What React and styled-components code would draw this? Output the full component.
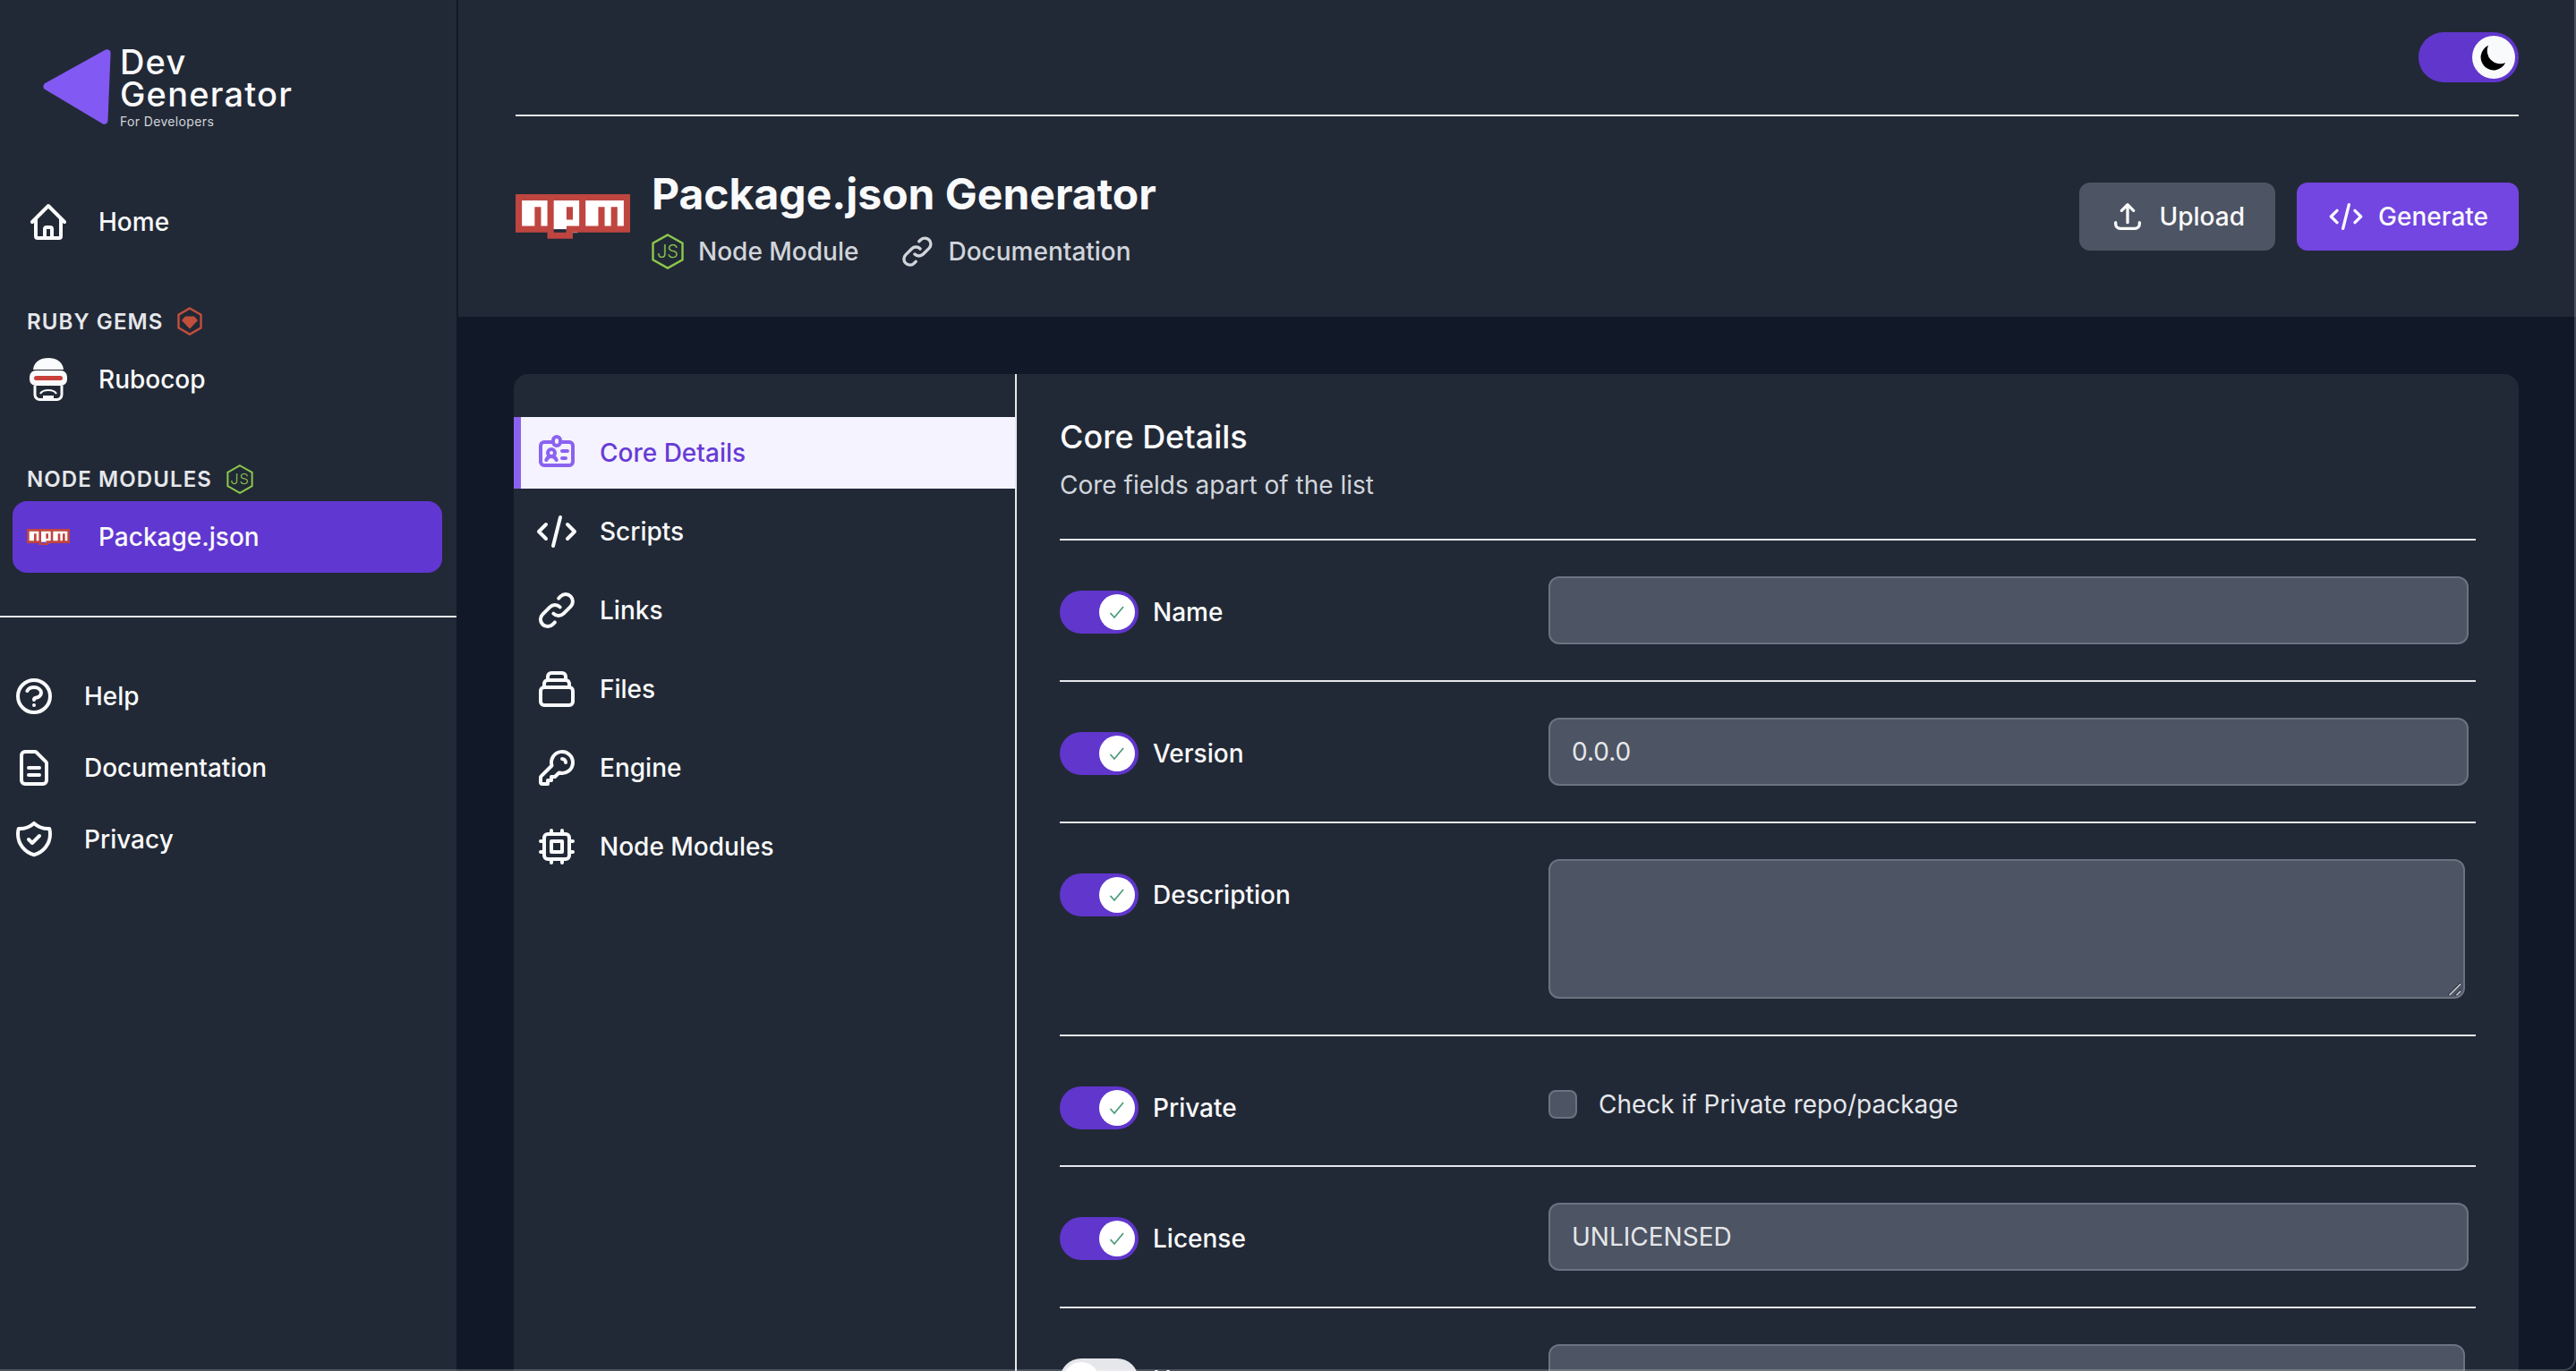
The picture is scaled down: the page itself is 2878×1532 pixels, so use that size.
import styled, { createGlobalStyle } from "styled-components";
import {
  HiOutlineHome,
  HiOutlineQuestionMarkCircle,
  HiOutlineDocumentText,
  HiOutlineShieldCheck,
  HiOutlineCode,
  HiOutlineLink,
  HiOutlineKey,
  HiOutlineChip,
  HiOutlineIdentification,
  HiOutlineUpload,
  HiOutlineCollection,
} from "react-icons/hi";

const GlobalStyle = createGlobalStyle`
  html, body {
    margin: 0;
    height: 100%;
    overflow: hidden;
    background: #111827;
  }
  body {
    font-family: Inter, "Liberation Sans", sans-serif;
    color: #f9fafb;
  }
  * {
    box-sizing: border-box;
  }
`;

const Page = styled.div`
  height: 100vh;
  display: flex;
  overflow: hidden;
  background: #111827;
`;
const WindowEdge = styled.div`
  position: fixed;
  inset: 0;
  pointer-events: none;
  border-right: 2px solid rgba(255, 255, 255, 0.2);
  border-bottom: 2px solid rgba(255, 255, 255, 0.2);
  border-bottom-right-radius: 14px;
`;

/* sidebar */
const Sidebar = styled.aside`
  width: 512px;
  flex-shrink: 0;
  background: #222936;
  border-right: 2px solid #111827;
`;
const LogoBlock = styled.div`
  height: 208px;
  padding: 54px 0 0 48px;
  display: flex;
  align-items: flex-start;
  gap: 10px;
`;
const LogoText = styled.div`
  margin-top: -3px;
`;
const LogoWord = styled.div`
  font-size: 38px;
  line-height: 36px;
  font-weight: 500;
  letter-spacing: 1.2px;
  color: #f9fafb;
`;
const LogoSub = styled.div`
  margin-top: 4px;
  font-size: 14px;
  line-height: 18px;
  letter-spacing: 0.35px;
  color: #d1d5db;
`;
const NavItem = styled.div`
  height: 80px;
  margin: 0 16px 0 14px;
  padding-left: ${(p) => p.$inset}px;
  display: flex;
  align-items: center;
  gap: 32px;
  font-size: 28px;
  font-weight: 500;
  color: #f9fafb;
  border-radius: 16px;
  background: ${(p) => (p.$active ? "#6137d1" : "transparent")};
  svg {
    flex-shrink: 0;
  }
`;
const NavIconBox = styled.span`
  width: 48px;
  height: 48px;
  display: flex;
  align-items: center;
  justify-content: center;
`;
const SectionHeading = styled.div`
  height: 40px;
  margin: 51px 0 5px;
  padding-left: 30px;
  display: flex;
  align-items: center;
  gap: 16px;
  font-size: 24px;
  font-weight: 600;
  letter-spacing: 1.1px;
  color: #e5e7eb;
`;
const SidebarRule = styled.div`
  height: 2px;
  margin: 48px 0;
  background: #e5e7eb;
`;

/* main */
const Main = styled.main`
  flex: 1;
  min-width: 0;
`;
const Header = styled.header`
  height: 354px;
  padding: 0 64px;
  background: #222936;
`;
const TopBar = styled.div`
  height: 130px;
  padding-top: 36px;
  display: flex;
  justify-content: flex-end;
  border-bottom: 2px solid #e5e7eb;
`;
const ThemeSwitch = styled.div`
  width: 112px;
  height: 56px;
  padding: 4px;
  border-radius: 28px;
  background: #6036cd;
  display: flex;
  justify-content: flex-end;
`;
const ThemeKnob = styled.div`
  width: 48px;
  height: 48px;
  border-radius: 50%;
  background: #f9fafb;
  display: flex;
  align-items: center;
  justify-content: center;
`;
const TitleRow = styled.div`
  height: 224px;
  display: flex;
  align-items: center;
  gap: 24px;
`;
const TitleBlock = styled.div`
  flex: 1;
  margin-top: 2px;
`;
const Title = styled.h1`
  margin: 0;
  font-size: 48px;
  line-height: 64px;
  font-weight: 700;
  color: #f9fafb;
`;
const MetaRow = styled.div`
  margin-top: 12px;
  display: flex;
  align-items: center;
  gap: 46px;
`;
const MetaItem = styled.div`
  display: flex;
  align-items: center;
  gap: ${(p) => p.$gap}px;
  font-size: 28px;
  line-height: 40px;
  font-weight: 500;
  color: #d1d5db;
`;
const ButtonRow = styled.div`
  display: flex;
  gap: 24px;
`;
const Button = styled.button`
  height: 76px;
  padding: 0 34px 0 ${(p) => (p.$primary ? 35 : 34)}px;
  display: flex;
  align-items: center;
  gap: 16px;
  border: 0;
  border-radius: 12px;
  font-family: inherit;
  font-size: 28px;
  font-weight: 500;
  color: #f9fafb;
  background: ${(p) => (p.$primary ? "#7345e1" : "#4d5463")};
`;

const Content = styled.div`
  padding: 64px 64px 0 62px;
`;
const Card = styled.section`
  display: flex;
  background: #222936;
  border-radius: 16px 16px 0 0;
`;
const Tabs = styled.nav`
  width: 562px;
  flex-shrink: 0;
  padding-top: 48px;
  display: flex;
  flex-direction: column;
  gap: 8px;
  border-right: 2px solid #e5e7eb;
`;
const Tab = styled.div`
  height: 80px;
  padding-left: ${(p) => (p.$active ? 16 : 24)}px;
  display: flex;
  align-items: center;
  gap: 24px;
  font-size: 28px;
  font-weight: 500;
  color: ${(p) => (p.$active ? "#673bd6" : "#f9fafb")};
  background: ${(p) => (p.$active ? "#f5f3ff" : "transparent")};
  border-left: ${(p) => (p.$active ? "8px solid #8b62f0" : "0")};
  svg {
    color: ${(p) => (p.$active ? "#8b62f0" : "#f9fafb")};
  }
`;
const FormPane = styled.div`
  flex: 1;
  min-width: 0;
  padding: 50px 48px 0;
`;
const FormTitle = styled.h2`
  margin: 0;
  font-size: 36px;
  line-height: 40px;
  font-weight: 500;
  color: #f9fafb;
`;
const FormSub = styled.p`
  margin: 14px 0 40px;
  font-size: 28px;
  line-height: 40px;
  color: #d1d5db;
`;
const Row = styled.div`
  padding: 40px 0;
  display: grid;
  grid-template-columns: 546px 1fr;
  border-top: 2px solid #e5e7eb;
`;
const RowLabel = styled.div`
  padding-top: 16px;
  display: flex;
  align-items: flex-start;
  gap: 16px;
`;
const LabelText = styled.span`
  font-size: 28px;
  line-height: 48px;
  font-weight: 500;
  color: #f9fafb;
`;
const Switch = styled.div`
  width: 88px;
  height: 48px;
  padding: 4px;
  border-radius: 24px;
  display: flex;
  justify-content: ${(p) => (p.$on ? "flex-end" : "flex-start")};
  background: ${(p) => (p.$on ? "#6036cd" : "#e5e7eb")};
`;
const SwitchKnob = styled.div`
  width: 40px;
  height: 40px;
  border-radius: 50%;
  background: #fff;
  display: flex;
  align-items: center;
  justify-content: center;
`;
const TextInput = styled.input`
  display: block;
  width: ${(p) => p.$width}px;
  height: 76px;
  padding: 0 24px;
  border: 2px solid #6b7280;
  border-radius: 12px;
  background: #4d5463;
  font-family: inherit;
  font-size: 28px;
  color: #e5e7eb;
  outline: none;
`;
const TextAreaWrap = styled.div`
  position: relative;
  width: 1024px;
  height: 156px;
`;
const TextArea = styled.textarea`
  display: block;
  width: 100%;
  height: 100%;
  padding: 16px 24px;
  border: 2px solid #6b7280;
  border-radius: 12px;
  background: #4d5463;
  font-family: inherit;
  font-size: 28px;
  color: #e5e7eb;
  outline: none;
  resize: none;
`;
const ResizeGrip = styled.svg`
  position: absolute;
  right: 4px;
  bottom: 3px;
  pointer-events: none;
`;
const CheckRow = styled.label`
  height: 64px;
  padding-top: 8px;
  display: flex;
  align-items: center;
  gap: 24px;
  font-size: 28px;
  color: #e5e7eb;
`;
const CheckBox = styled.input`
  appearance: none;
  width: 32px;
  height: 32px;
  margin: 0;
  border: 2px solid #6b7280;
  border-radius: 8px;
  background: #4d5463;
`;

/* logos and glyphs */
function LogoTriangle() {
  return (
    <svg width="76" height="86" viewBox="0 0 76 86">
      <path
        d="M70 1.5 a4 4 0 0 1 5.6 3.8 L72.5 81 a4 4 0 0 1 -6 3.2 L2.4 46 a4 4 0 0 1 0 -7 Z"
        fill="#8259f2"
      />
    </svg>
  );
}

function NpmLogo({ width }) {
  return (
    <svg width={width} viewBox="0 160 576 224">
      <rect x="24" y="184" width="528" height="152" fill="#fff" />
      <rect x="256" y="330" width="56" height="24" fill="#fff" />
      <path
        d="M288 288h-32v-64h32v64zm288-128v192H288v32H160v-32H0V160h576zm-416 32H32v128h64v-96h32v96h32V192zm160 0H192v160h64v-32h64V192zm224 0H352v128h64v-96h32v96h32v-96h32v96h32V192z"
        fill="#bf4540"
      />
    </svg>
  );
}

function JsHex({ width, height }) {
  return (
    <svg width={width} height={height} viewBox="0 0 36 40">
      <polygon
        points="18,1.5 34.5,10.8 34.5,29.2 18,38.5 1.5,29.2 1.5,10.8"
        fill="none"
        stroke="#8cc84b"
        strokeWidth="2.4"
      />
      <text
        x="18"
        y="27"
        textAnchor="middle"
        fontFamily="Inter, sans-serif"
        fontSize="20"
        fontWeight="300"
        fill="#8cc84b"
      >
        JS
      </text>
    </svg>
  );
}

function GemHex() {
  return (
    <svg width="28" height="32" viewBox="0 0 28 32">
      <polygon
        points="14,1.5 26.5,8.7 26.5,23.3 14,30.5 1.5,23.3 1.5,8.7"
        fill="none"
        stroke="#c14f3b"
        strokeWidth="2.4"
      />
      <polygon points="9,10.5 19,10.5 23,15 14,24.5 5,15" fill="#c14f3b" />
    </svg>
  );
}

function RubocopIcon() {
  return (
    <svg width="42" height="48" viewBox="0 0 42 48">
      <path d="M4 13 C5 4 12 0 21 0 C30 0 37 4 38 13 Z" fill="#f9fafb" />
      <rect x="0" y="14" width="42" height="17" rx="7" fill="#f9fafb" />
      <rect x="5" y="20" width="32" height="5" rx="2.5" fill="#c8403a" />
      <path
        d="M6 31 V41 A5.5 5.5 0 0 0 11.5 46.5 H30.5 A5.5 5.5 0 0 0 36 41 V31"
        fill="none"
        stroke="#f9fafb"
        strokeWidth="3"
      />
      <path
        d="M12 40 Q14 36 21 36 Q28 36 30 40"
        fill="none"
        stroke="#f9fafb"
        strokeWidth="2"
      />
      <rect x="15" y="42" width="12" height="3" fill="#f9fafb" />
    </svg>
  );
}

function MoonIcon() {
  return (
    <svg width="36" height="36" viewBox="0 0 20 20">
      <path d="M17.293 13.293A8 8 0 016.707 2.707a8.001 8.001 0 1010.586 10.586z" fill="#000" />
    </svg>
  );
}

function CheckIcon() {
  return (
    <svg width="20" height="18" viewBox="0 0 20 18">
      <path d="M2.5 10 L7 15 L17 3" fill="none" stroke="#4c9c79" strokeWidth="1.8" />
    </svg>
  );
}

function ToggleField({ on = true, label }) {
  return (
    <RowLabel>
      <Switch $on={on}>
        <SwitchKnob>{on && <CheckIcon />}</SwitchKnob>
      </Switch>
      <LabelText>{label}</LabelText>
    </RowLabel>
  );
}

const tabs = [
  { name: "Core Details", icon: HiOutlineIdentification, active: true },
  { name: "Scripts", icon: HiOutlineCode },
  { name: "Links", icon: HiOutlineLink },
  { name: "Files", icon: HiOutlineCollection },
  { name: "Engine", icon: HiOutlineKey },
  { name: "Node Modules", icon: HiOutlineChip },
];

const bottomLinks = [
  { name: "Help", icon: HiOutlineQuestionMarkCircle },
  { name: "Documentation", icon: HiOutlineDocumentText },
  { name: "Privacy", icon: HiOutlineShieldCheck },
];

export default function App() {
  return (
    <Page>
      <GlobalStyle />
      <Sidebar>
        <LogoBlock>
          <LogoTriangle />
          <LogoText>
            <LogoWord>Dev</LogoWord>
            <LogoWord>Generator</LogoWord>
            <LogoSub>For Developers</LogoSub>
          </LogoText>
        </LogoBlock>
        <NavItem $inset={16}>
          <HiOutlineHome size={48} />
          Home
        </NavItem>
        <SectionHeading>
          RUBY GEMS
          <GemHex />
        </SectionHeading>
        <NavItem $inset={16}>
          <NavIconBox>
            <RubocopIcon />
          </NavIconBox>
          Rubocop
        </NavItem>
        <SectionHeading>
          NODE MODULES
          <JsHex width={30} height={33} />
        </SectionHeading>
        <NavItem $active $inset={16}>
          <NavIconBox>
            <NpmLogo width={48} />
          </NavIconBox>
          Package.json
        </NavItem>
        <SidebarRule />
        {bottomLinks.map((link) => (
          <NavItem key={link.name} $inset={0}>
            <link.icon size={48} />
            {link.name}
          </NavItem>
        ))}
      </Sidebar>
      <Main>
        <Header>
          <TopBar>
            <ThemeSwitch>
              <ThemeKnob>
                <MoonIcon />
              </ThemeKnob>
            </ThemeSwitch>
          </TopBar>
          <TitleRow>
            <NpmLogo width={128} />
            <TitleBlock>
              <Title>Package.json Generator</Title>
              <MetaRow>
                <MetaItem $gap={16}>
                  <JsHex width={36} height={40} />
                  Node Module
                </MetaItem>
                <MetaItem $gap={14}>
                  <HiOutlineLink size={40} />
                  Documentation
                </MetaItem>
              </MetaRow>
            </TitleBlock>
            <ButtonRow>
              <Button>
                <HiOutlineUpload size={40} />
                Upload
              </Button>
              <Button $primary>
                <HiOutlineCode size={40} />
                Generate
              </Button>
            </ButtonRow>
          </TitleRow>
        </Header>
        <Content>
          <Card>
            <Tabs>
              {tabs.map((tab) => (
                <Tab key={tab.name} $active={tab.active}>
                  <tab.icon size={48} />
                  {tab.name}
                </Tab>
              ))}
            </Tabs>
            <FormPane>
              <FormTitle>Core Details</FormTitle>
              <FormSub>Core fields apart of the list</FormSub>
              <Row>
                <ToggleField label="Name" />
                <TextInput $width={1028} defaultValue="" />
              </Row>
              <Row>
                <ToggleField label="Version" />
                <TextInput $width={1028} defaultValue="0.0.0" />
              </Row>
              <Row>
                <ToggleField label="Description" />
                <TextAreaWrap>
                  <TextArea defaultValue="" />
                  <ResizeGrip width="16" height="16" viewBox="0 0 16 16">
                    <path d="M1 15 L15 1" stroke="#2b2f36" strokeWidth="1.2" />
                    <path d="M2.5 15 L15 2.5" stroke="#d1d5db" strokeWidth="1.4" />
                    <path d="M9 15 L15 9" stroke="#2b2f36" strokeWidth="1.2" />
                    <path d="M10.5 15 L15 10.5" stroke="#d1d5db" strokeWidth="1.4" />
                  </ResizeGrip>
                </TextAreaWrap>
              </Row>
              <Row>
                <ToggleField label="Private" />
                <CheckRow>
                  <CheckBox type="checkbox" />
                  Check if Private repo/package
                </CheckRow>
              </Row>
              <Row>
                <ToggleField label="License" />
                <TextInput $width={1028} defaultValue="UNLICENSED" />
              </Row>
              <Row>
                <ToggleField on={false} label="Homepage" />
                <TextInput $width={1024} defaultValue="" />
              </Row>
            </FormPane>
          </Card>
        </Content>
      </Main>
      <WindowEdge />
    </Page>
  );
}
